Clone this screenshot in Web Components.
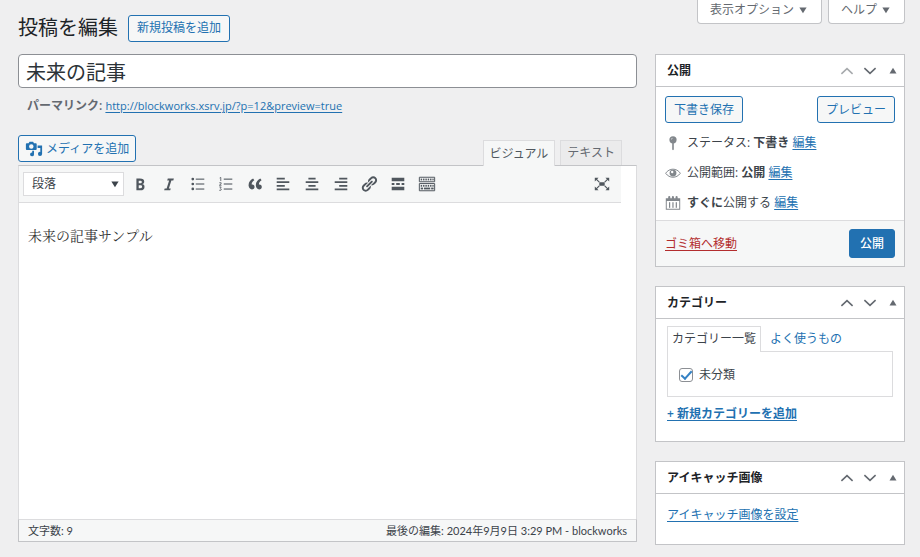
<!DOCTYPE html>
<html lang="ja">
<head>
<meta charset="utf-8">
<title>投稿を編集</title>
<style>
:root {
  --bg: #efeff0;
  --surface: #f6f7f7;
  --line: #c3c4c7;
  --soft: #dcdcde;
  --ink: #3c434a;
  --dark: #1d2327;
  --muted: #646970;
  --blue: #2271b1;
  --red: #b32d2e;
}
body {
  margin: 0;
  background: var(--bg);
  color: var(--ink);
  font: 12px/18px "Open Sans", "Noto Sans CJK JP", sans-serif;
}
</style>
</head>
<body>
<post-edit-page></post-edit-page>
<script>
const bars = (x) => x.map(([a, b, c, d]) => `<rect x="${a}" y="${b}" width="${c}" height="${d}"/>`).join('');
const ICONS = {
  bold: '<path d="M6 4v13h4.54c1.37 0 2.46-.33 3.26-1 .8-.66 1.2-1.58 1.2-2.77 0-.84-.17-1.51-.51-2.01s-.9-.85-1.67-1.03v-.09c.57-.1 1.02-.4 1.36-.9s.51-1.13.51-1.91c0-1.14-.39-1.98-1.17-2.5C12.75 4.26 11.5 4 9.78 4H6zm2.57 5.15V6.26h1.36c.73 0 1.27.11 1.61.32.34.22.51.58.51 1.07 0 .54-.16.92-.47 1.15s-.82.35-1.51.35h-1.5zm0 2.19h1.6c1.44 0 2.16.53 2.16 1.61 0 .6-.17 1.05-.51 1.34s-.86.43-1.57.43H8.57v-3.38z"/>',
  italic: '<path d="M14.78 6h-2.13l-2.8 9h2.12l-.62 2H4.6l.62-2h2.14l2.8-9H8.03l.62-2h6.75z"/>',
  bullets: '<circle cx="4.2" cy="4.5" r="1.5"/><circle cx="4.2" cy="10" r="1.5"/><circle cx="4.2" cy="15.5" r="1.5"/>' + bars([[7.5, 4, 9.5, 1.2], [7.5, 9.4, 9.5, 1.2], [7.5, 15, 9.5, 1.2]]),
  numbers: bars([[7.5, 4, 9.5, 1.2], [7.5, 9.4, 9.5, 1.2], [7.5, 15, 9.5, 1.2]]) + '<path fill="none" stroke="currentColor" stroke-width=".9" d="M3 3.3l1.2-.6v4M2.6 8.6h2v1.2l-2 1.6h2.4M2.6 13.3h2l-.8 1.5 1 .8-.6 1.4H2.5"/>',
  quote: '<path d="M9.49 13.22c0-.74-.2-1.38-.61-1.9-.62-.78-1.83-.88-2.53-.72-.29-1.65 1.11-3.75 2.92-4.65L7.88 4c-2.73 1.3-5.42 4.28-4.96 8.05C3.21 14.43 4.59 16 6.54 16c.85 0 1.56-.25 2.12-.75s.83-1.18.83-2.03zm8.05 0c0-.74-.2-1.38-.61-1.9-.63-.78-1.83-.88-2.53-.72-.29-1.65 1.11-3.75 2.92-4.65L15.93 4c-2.73 1.3-5.41 4.28-4.95 8.05.29 2.38 1.66 3.95 3.61 3.95.85 0 1.56-.25 2.12-.75s.83-1.18.83-2.03z"/>',
  left: '<path d="M12 5V3H3v2h9zm5 4V7H3v2h14zm-5 4v-2H3v2h9zm5 4v-2H3v2h14z"/>',
  center: '<path d="M14 5V3H6v2h8zm3 4V7H3v2h14zm-3 4v-2H6v2h8zm3 4v-2H3v2h14z"/>',
  right: '<path d="M17 5V3H8v2h9zm0 4V7H3v2h14zm0 4v-2H8v2h9zm0 4v-2H3v2h14z"/>',
  link: '<path d="M17.74 2.76c1.68 1.69 1.68 4.41 0 6.1l-1.53 1.52c-1.12 1.12-2.7 1.47-4.14 1.09l2.62-2.61.76-.77.76-.76c.84-.84.84-2.2 0-3.04-.84-.85-2.2-.85-3.04 0l-.77.76-3.38 3.38c-.37-1.44-.02-3.02 1.1-4.14l1.52-1.53c1.69-1.68 4.42-1.68 6.1 0zM8.59 13.43l5.34-5.34c.42-.42.42-1.1 0-1.52-.44-.43-1.13-.39-1.53 0l-5.33 5.34c-.42.42-.42 1.1 0 1.52.44.43 1.13.39 1.52 0zm-.76 2.29l4.14-4.15c.38 1.44.03 3.02-1.09 4.14l-1.52 1.53c-1.69 1.68-4.41 1.68-6.1 0-1.68-1.68-1.68-4.42 0-6.1l1.53-1.52c1.12-1.12 2.7-1.47 4.14-1.1l-4.14 4.15c-.85.84-.85 2.2 0 3.05.84.84 2.2.84 3.04 0z"/>',
  more: '<path d="M17 7V3H3v4h14zM6 11V9H3v2h3zm6 0V9H8v2h4zm5 0V9h-3v2h3zm0 6v-4H3v4h14z"/>',
  sink: '<path fill="none" stroke="currentColor" stroke-width="1.1" d="M1.5 2.5h17v5h-17zM1.5 9.5h17v8h-17z"/>' + bars([[3, 4, 1.6, 2], [5.6, 4, 1.6, 2], [8.2, 4, 1.6, 2], [10.8, 4, 1.6, 2], [13.4, 4, 1.6, 2], [16, 4, 1.4, 2], [3, 11, 1.6, 2], [5.6, 11, 1.6, 2], [8.2, 11, 1.6, 2], [10.8, 11, 1.6, 2], [13.4, 11, 1.6, 2], [16, 11, 1.4, 2], [3, 14, 2.6, 2], [6.6, 14, 7, 2], [14.6, 14, 2.8, 2]]),
  full: '<path d="M7 8h6v4H7zM2 3h4.200L2 7.200zM18 3h-4.200L18 7.200zM2 17h4.200L2 12.800zM18 17h-4.200L18 12.800z"/><path fill="none" stroke="currentColor" stroke-width="1.300" d="M3 4l4 4M17 4l-4 4M3 16l4-4M17 16l-4-4"/>',
  media: '<path fill-rule="evenodd" d="M2 3.500h2L5 2h4l1 1.500h2a1 1 0 0 1 1 1V10a1 1 0 0 1-1 1H2a1 1 0 0 1-1-1V4.500a1 1 0 0 1 1-1zM7 4.700a2.500 2.500 0 1 0 0 5 2.500 2.500 0 1 0 0-5z"/><path d="M14 6h5v9.500a2.300 2.300 0 1 1-2-2.300V9h-3zM10 12v4a2.200 2.200 0 1 1-2-2.200V12z"/>',
  pin: '<circle cx="10" cy="6" r="4.500"/><path d="M9 10h2v8l-1 1-1-1z"/><path fill="#fff" opacity=".7" d="M7.500 5.500a2.500 2.500 0 0 1 2-2v1a2 2 0 0 0-1 1z"/>',
  eye: '<path fill="none" stroke="currentColor" stroke-width="1.200" d="M.8 10.300C5.500 3.500 14.500 3.500 19.200 10.300 14.500 17 5.500 17 .8 10.300z"/><path fill-rule="evenodd" d="M10 5.800a4.300 4.300 0 1 0 0 8.600A4.300 4.300 0 1 0 10 5.800zm-1 1.500A1.500 1.500 0 1 1 9 10.300a1.500 1.500 0 0 1 0-3z"/>',
  calendar: '<path fill-rule="evenodd" d="M1 4h3V2.500a1.300 1.300 0 0 1 2.600 0V4h2V2.500a1.300 1.300 0 0 1 2.600 0V4h2V2.500a1.300 1.300 0 0 1 2.600 0V4H19v14.500H1zM2.200 7.500v9.800h15.600V7.500z"/>' + bars([[5, 9, 1.500, 7], [9.200, 9, 1.500, 7], [13.400, 9, 1.500, 7]]),
  up: '<path fill="none" stroke="currentColor" stroke-width="2" d="M3 13.500l7-6.500 7 6.500"/>',
  down: '<path fill="none" stroke="currentColor" stroke-width="2" d="M3 6.500l7 6.500 7-6.500"/>',
  tri: '<path d="M5 13.500h10L10 5.500z"/>',
  drop: '<path d="M4 6h12l-6 9.500z"/>'
};

const LINK = `a { color: var(--blue); text-decoration: underline; text-underline-offset: 2px; }`;

function define(name, css, html, setup) {
  const t = document.createElement('template');
  t.innerHTML = `<style>*{box-sizing:border-box}${css}</style>${html}`;
  customElements.define(name, class extends HTMLElement {
    constructor() {
      super();
      this.attachShadow({ mode: 'open' }).append(t.content.cloneNode(true));
    }
    connectedCallback() { if (setup) setup(this, this.shadowRoot); }
  });
}

define('wp-icon', `
  :host { display: inline-flex; width: 18px; height: 18px; flex: none; }
  svg { width: 100%; height: 100%; fill: currentColor; }`,
  `<svg viewBox="0 0 20 20" aria-hidden="true"></svg>`,
  (el, root) => { root.querySelector('svg').innerHTML = ICONS[el.getAttribute('name')]; });

define('wp-button', `
  :host { display: inline-flex; }
  button { display: flex; align-items: center; gap: 3px; height: 27px; padding: 0 var(--pad, 8px);
    font: inherit; white-space: nowrap; color: var(--blue); background: var(--surface);
    border: 1px solid var(--blue); border-radius: 3px; }
  :host([primary]) button { height: 29px; padding: 0 10px; background: var(--blue); color: #fff; font-weight: 500; }`,
  `<button type="button"><slot></slot></button>`);

define('screen-options', `
  :host { display: flex; gap: 6px; align-items: flex-start; }
  button { display: flex; align-items: center; gap: 3px; height: 24px; padding: 0 12px 3px; font: inherit;
    color: var(--muted); background: #fff; border: 1px solid var(--line); border-top: 0; border-radius: 0 0 4px 4px; }
  wp-icon { width: 12px; height: 12px; }`,
  `<button type="button">表示オプション<wp-icon name="drop"></wp-icon></button>
   <button type="button">ヘルプ<wp-icon name="drop"></wp-icon></button>`);

define('post-box', `
  :host { display: block; background: #fff; border: 1px solid var(--line); }
  header { display: flex; align-items: center; height: 32px; padding: 0 0 0 11px; border-bottom: 1px solid var(--line); }
  h2 { flex: 1; margin: 0; font-size: 12px; font-weight: 700; color: var(--dark); }
  button { display: flex; justify-content: center; width: 23px; padding: 0; border: 0; background: none; color: var(--muted); }
  wp-icon { width: 16px; height: 16px; }
  .toggle wp-icon { width: 14px; height: 14px; }
  :host([first]) .up { color: #a7aaad; }`,
  `<header><h2></h2>
    <button type="button" class="up" aria-label="上に移動"><wp-icon name="up"></wp-icon></button>
    <button type="button" aria-label="下に移動"><wp-icon name="down"></wp-icon></button>
    <button type="button" class="toggle" aria-label="パネルを切り替え"><wp-icon name="tri"></wp-icon></button>
   </header><slot></slot>`,
  (el, root) => { root.querySelector('h2').textContent = el.getAttribute('heading'); });

define('publish-panel', LINK + `
  :host { display: block; }
  .actions { display: flex; justify-content: space-between; padding: 9px 9px 5px; }
  ul { list-style: none; margin: 0; padding: 0 9px 2px; }
  li { display: flex; align-items: center; gap: 6px; height: 30px; }
  li wp-icon { width: 16px; height: 16px; color: #82878c; }
  b { font-weight: 700; }
  footer { display: flex; align-items: center; justify-content: space-between; padding: 8px 9px;
    background: var(--surface); border-top: 1px solid var(--soft); }
  .trash { color: var(--red); }`,
  `<div class="actions"><wp-button>下書き保存</wp-button><wp-button>プレビュー</wp-button></div>
   <ul>
    <li><wp-icon name="pin"></wp-icon><span>ステータス: <b>下書き</b> <a href="#status">編集</a></span></li>
    <li><wp-icon name="eye"></wp-icon><span>公開範囲: <b>公開</b> <a href="#visibility">編集</a></span></li>
    <li><wp-icon name="calendar"></wp-icon><span><b>すぐに</b>公開する <a href="#date">編集</a></span></li>
   </ul>
   <footer><a class="trash" href="#trash">ゴミ箱へ移動</a><wp-button primary>公開</wp-button></footer>`);

define('category-panel', LINK + `
  :host { display: block; padding: 7px 11px 18px; }
  .tabs { display: flex; }
  .tabs a { padding: 3px 4px; border: 1px solid transparent; border-bottom: 0; text-decoration: none; }
  .tabs a[aria-selected=true] { color: var(--ink); background: #fff; border-color: var(--soft); margin-bottom: -1px; padding-bottom: 4px; }
  .tabs a + a { padding-left: 8px; }
  .panel { border: 1px solid var(--soft); padding: 14px 11px 12px; }
  label { display: flex; align-items: center; gap: 6px; }
  input { appearance: none; width: 14px; height: 14px; margin: 0; border: 1px solid #8c8f94; border-radius: 3px; background: #fff; display: grid; place-items: center; }
  input:checked::before { content: ""; width: 9px; height: 4px; border: solid #3582c4; border-width: 0 0 2px 2px; transform: translateY(-1px) rotate(-48deg); }
  p { margin: 8px 0 0; font-weight: 600; }`,
  `<div class="tabs" role="tablist"><a role="tab" aria-selected="true" href="#all">カテゴリー一覧</a><a role="tab" href="#popular">よく使うもの</a></div>
   <div class="panel"><label><input type="checkbox" checked>未分類</label></div>
   <p><a href="#new">+ 新規カテゴリーを追加</a></p>`);

define('thumbnail-panel', LINK + `:host { display: block; padding: 12px 11px 20px; }`,
  `<a href="#thumbnail">アイキャッチ画像を設定</a>`);

define('editor-toolbar', `
  :host { display: flex; align-items: center; height: 37px; margin-right: 15px; padding: 0 9px 0 4px;
    background: var(--surface); border-bottom: 1px solid var(--soft); }
  .select { position: relative; display: flex; margin-right: 2px; color: var(--ink); }
  select { appearance: none; width: 101px; height: 24px; padding: 0 8px; font: inherit; color: inherit;
    background: #fff; border: 1px solid var(--soft); border-radius: 0; }
  .select wp-icon { position: absolute; right: 3px; top: 6px; width: 12px; height: 12px; pointer-events: none; }
  .tools { display: grid; grid-template-columns: repeat(11, 1fr); width: 315px; }
  button { display: flex; justify-content: center; padding: 0; border: 0; background: none; color: #50575e; }
  .full { margin-left: auto; width: 20px; }`,
  `<div class="select"><select aria-label="段落形式"><option>段落</option></select><wp-icon name="drop"></wp-icon></div>
   <div class="tools"></div>`,
  (el, root) => {
    const tools = root.querySelector('.tools');
    if (tools.children.length) return;
    const items = { bold: '太字', italic: 'イタリック', bullets: '番号なしリスト', numbers: '番号付きリスト', quote: '引用', left: '左寄せ', center: '中央揃え', right: '右寄せ', link: 'リンクの挿入/編集', more: '「続きを読む」タグを挿入', sink: 'ツールバー切り替え', full: '集中執筆モード' };
    for (const [name, label] of Object.entries(items)) {
      const b = document.createElement('button');
      b.type = 'button';
      b.className = name;
      b.setAttribute('aria-label', label);
      b.innerHTML = `<wp-icon name="${name}"></wp-icon>`;
      (name === 'full' ? root : tools).append(b);
    }
  });

define('post-editor', `
  :host { display: block; }
  .top { display: flex; justify-content: space-between; align-items: flex-start; }
  wp-button { --pad: 6px; }
  .tabs { display: flex; gap: 5px; padding: 5px 15px 0 0; }
  .tabs button { height: 25px; padding: 0 6px; font: inherit; color: var(--muted); background: #ebebec;
    border: 1px solid var(--soft); border-bottom: 0; }
  .tabs .on { height: 26px; margin-bottom: -1px; background: var(--surface); color: #50575e; position: relative; }
  .box { background: #fff; border: 1px solid var(--soft); border-top-color: var(--line); }
  .body { min-height: 316px; padding: 21px 9px; outline: 0; color: #333;
    font: 14px/22px "Noto Serif CJK JP", "Noto Serif JP", "Noto Sans CJK JP", serif; }
  .body p { margin: 0; }
  footer { display: flex; justify-content: space-between; padding: 2px 9px 1px; font-size: 11px;
    font-family: Lato, "Noto Sans CJK JP", sans-serif;
    background: var(--surface); border: 1px solid var(--line); border-top-color: var(--soft); margin: 0 -1px -1px; }`,
  `<div class="top"><wp-button><wp-icon name="media"></wp-icon>メディアを追加</wp-button>
    <div class="tabs"><button type="button" class="on">ビジュアル</button><button type="button">テキスト</button></div></div>
   <div class="box"><editor-toolbar></editor-toolbar>
    <div class="body" role="textbox" aria-label="本文" aria-multiline="true" contenteditable="true" spellcheck="false"><p>未来の記事サンプル</p></div>
    <footer><span>文字数: 9</span><span>最後の編集: 2024年9月9日 3:29 PM - blockworks</span></footer></div>`);

define('post-edit-page', LINK + `
  :host { display: block; padding: 0 15px 12px 18px; }
  .head { display: flex; justify-content: space-between; align-items: flex-start; height: 54px; }
  .title { display: flex; align-items: center; gap: 10px; padding-top: 14px; }
  h1 { margin: 0; font-size: 20px; line-height: 28px; font-weight: 400; color: var(--dark); }
  .cols { display: grid; grid-template-columns: minmax(0, 1fr) 250px; gap: 18px; align-items: start; }
  .name { display: block; width: 100%; height: 34px; padding: 0 7px; font: inherit; font-size: 20px; line-height: 28px; color: #2c3338;
    background: #fff; border: 1px solid #8c8f94; border-radius: 4px; }
  .permalink { margin: 0; padding: 9px 9px 20px; color: var(--muted); }
  .permalink a { font-size: 11px; }
  .permalink b { font-weight: 600; }
  aside { display: grid; gap: 19px; }`,
  `<div class="head"><div class="title"><h1>投稿を編集</h1><wp-button>新規投稿を追加</wp-button></div><screen-options></screen-options></div>
   <div class="cols"><main>
     <input class="name" type="text" aria-label="タイトル" value="未来の記事">
     <p class="permalink"><b>パーマリンク:</b> <a href="#preview">http://blockworks.xsrv.jp/?p=12&amp;preview=true</a></p>
     <post-editor></post-editor></main>
    <aside>
     <post-box first heading="公開"><publish-panel></publish-panel></post-box>
     <post-box heading="カテゴリー"><category-panel></category-panel></post-box>
     <post-box heading="アイキャッチ画像"><thumbnail-panel></thumbnail-panel></post-box>
    </aside></div>`);
</script>
</body>
</html>
